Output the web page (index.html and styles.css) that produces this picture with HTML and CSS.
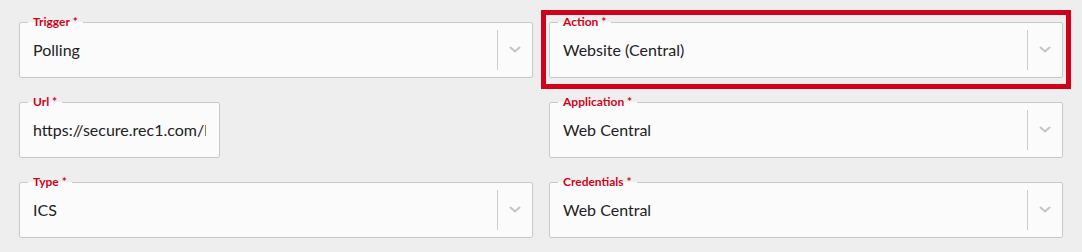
FILE: index.html
```html
<!doctype html>
<html lang="en">
	<head>
		<meta charset="UTF-8" />
		<meta name="viewport" content="width=device-width, initial-scale=1.0" />
		<title>Polling Settings</title>
		<link rel="stylesheet" href="styles.css">
	</head>

	<body>
		<form class="settings-form">
			<fieldset class="field">
				<legend>Trigger <span class="req">*</span></legend>
				<div class="field-row">
					<div class="field-value">Polling</div>
					<div class="indicator">
						<svg width="12" height="7" viewBox="0 0 12 7"><polyline points="1,1 6,5.5 11,1" /></svg>
					</div>
				</div>
			</fieldset>

			<div class="marked">
				<fieldset class="field">
					<legend>Action <span class="req">*</span></legend>
					<div class="field-row">
						<div class="field-value">Website (Central)</div>
						<div class="indicator">
							<svg width="12" height="7" viewBox="0 0 12 7"><polyline points="1,1 6,5.5 11,1" /></svg>
						</div>
					</div>
				</fieldset>
			</div>

			<fieldset class="field field-short">
				<legend>Url <span class="req">*</span></legend>
				<div class="field-row">
					<div class="field-value field-input">https://secure.rec1.com/l</div>
				</div>
			</fieldset>

			<fieldset class="field">
				<legend>Application <span class="req">*</span></legend>
				<div class="field-row">
					<div class="field-value">Web Central</div>
					<div class="indicator">
						<svg width="12" height="7" viewBox="0 0 12 7"><polyline points="1,1 6,5.5 11,1" /></svg>
					</div>
				</div>
			</fieldset>

			<fieldset class="field">
				<legend>Type <span class="req">*</span></legend>
				<div class="field-row">
					<div class="field-value">ICS</div>
					<div class="indicator">
						<svg width="12" height="7" viewBox="0 0 12 7"><polyline points="1,1 6,5.5 11,1" /></svg>
					</div>
				</div>
			</fieldset>

			<fieldset class="field">
				<legend>Credentials <span class="req">*</span></legend>
				<div class="field-row">
					<div class="field-value">Web Central</div>
					<div class="indicator">
						<svg width="12" height="7" viewBox="0 0 12 7"><polyline points="1,1 6,5.5 11,1" /></svg>
					</div>
				</div>
			</fieldset>
		</form>
	</body>
</html>
```

FILE: styles.css
```css
body {
	font-family: Lato, "Open Sans", sans-serif;
	margin: 0;
	background: #eeeeee;
	color: #222;
}

.settings-form {
	display: grid;
	grid-template-columns: 514px 514px;
	column-gap: 16px;
	row-gap: 18px;
	padding: 16px 0 0 19px;
}

.field {
	margin: 0;
	padding: 0 0 6px 13px;
	min-width: 0;
	background: #fbfbfb;
	border: 1px solid #c8c8c8;
	border-radius: 2px;
}

.field legend {
	margin-left: -5px;
	padding: 0 5px;
	font-size: 12px;
	line-height: 12px;
	font-weight: 700;
	color: #d0021b;
}

.field-short {
	width: 201px;
	box-sizing: border-box;
	justify-self: start;
}

.field-row {
	display: flex;
	align-items: center;
	height: 43px;
}

.field-value {
	flex: 1;
	min-width: 0;
	font-size: 16px;
	white-space: nowrap;
	overflow: hidden;
}

.field-input {
	margin-right: 13px;
}

.indicator {
	display: flex;
	align-items: center;
	justify-content: center;
	width: 34px;
	height: 40px;
	border-left: 1px solid #cccccc;
}

.indicator svg {
	fill: none;
	stroke: #c4c4c4;
	stroke-width: 2;
}

/* highlight frame around the action select */
.marked {
	position: relative;
}

.marked::after {
	content: "";
	position: absolute;
	top: -6px;
	left: -8px;
	right: -8px;
	bottom: -11px;
	border: 5px solid #d0021b;
	pointer-events: none;
}
```
